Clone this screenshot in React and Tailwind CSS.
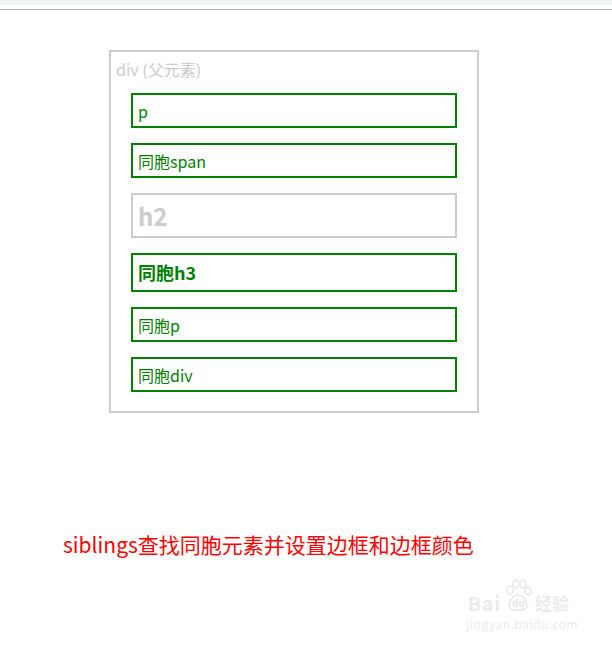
const font = { fontFamily: '"Noto Sans CJK SC", "Noto Sans", sans-serif' };

const Sibling = ({ children, className = '' }) => (
  <div className={`flex items-center border-2 px-[5px] ${className}`}>{children}</div>
);

export default function App() {
  return (
    <div className="relative w-[612px] h-[649px] bg-white overflow-hidden" style={font}>
      {/* browser chrome remnants */}
      <div className="h-[5px] bg-[#f2f3f5]" />
      <div className="mt-[4px] border-t border-[#b4b4b4]" />

      {/* parent div */}
      <div className="ml-[109px] mt-[40px] w-[370px] border-2 border-[#cccccc] pb-[19px]">
        <div className="pt-[6px] pl-[5px] text-[16px] leading-[22px] text-[#cccccc]">div (父元素)</div>
        <div className="mt-[13px] mx-[20px] flex flex-col gap-[15px]">
          <Sibling className="h-[35px] border-[#008000] text-[16px] text-[#008000]">p</Sibling>
          <Sibling className="h-[35px] border-[#008000] text-[16px] text-[#008000]">同胞span</Sibling>
          <Sibling className="h-[45px] border-[#cccccc] text-[24px] font-bold text-[#cccccc]">h2</Sibling>
          <Sibling className="h-[39px] border-[#008000] text-[18px] font-bold text-[#008000]">同胞h3</Sibling>
          <Sibling className="h-[35px] border-[#008000] text-[16px] text-[#008000]">同胞p</Sibling>
          <Sibling className="h-[35px] border-[#008000] text-[16px] text-[#008000]">同胞div</Sibling>
        </div>
      </div>

      <div className="mt-[118px] ml-[63px] text-[21px] leading-[26px] text-[#ff0000]">
        siblings查找同胞元素并设置边框和边框颜色
      </div>

      {/* watermark */}
      <div className="absolute left-[468px] top-[578px] text-[#ebebeb]">
        <div className="flex items-end">
          <span className="text-[19px] font-bold leading-[18px] tracking-[1px]">Bai</span>
          <svg width="34" height="34" viewBox="0 0 34 34" fill="none" stroke="#e6e6e6" strokeWidth="1.5">
            <ellipse cx="9" cy="12" rx="3" ry="4" />
            <ellipse cx="15" cy="6" rx="3" ry="4" />
            <ellipse cx="22" cy="6" rx="3" ry="4" />
            <ellipse cx="27" cy="13" rx="3" ry="4" />
            <path d="M8 28c0-6 5-11 9-11s9 5 9 11c0 3-4 4-9 4s-9-1-9-4z" />
            <text x="11" y="29" fontSize="10" fill="#e6e6e6" stroke="none" fontWeight="bold">du</text>
          </svg>
          <span className="text-[17px] font-bold leading-[18px]">经验</span>
        </div>
        <div className="mt-[6px] -ml-[2px] text-[12px] leading-[12px] tracking-[0.5px]">jingyan.baidu.com</div>
      </div>
    </div>
  );
}
